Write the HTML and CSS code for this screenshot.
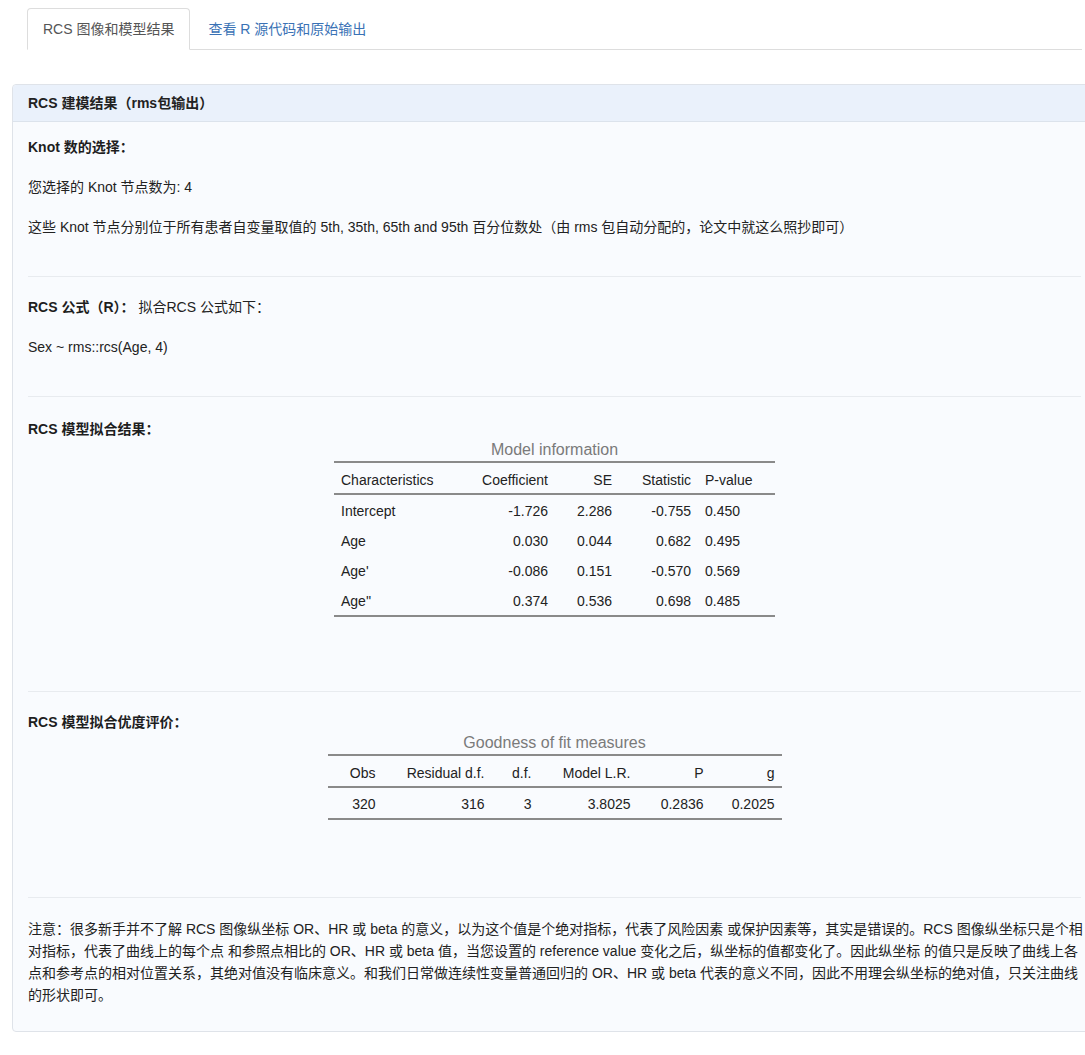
FILE: index.html
```html
<!DOCTYPE html>
<html lang="zh-CN">
<head>
<meta charset="utf-8">
<title>RCS 图像和模型结果</title>
<link rel="stylesheet" href="styles.css">
</head>
<body>
<div class="page">
  <ul class="tabs">
    <li class="tab active"><a>RCS 图像和模型结果</a></li>
    <li class="tab"><a>查看 R 源代码和原始输出</a></li>
  </ul>

  <div class="panel">
    <div class="panel-heading">RCS 建模结果（rms包输出）</div>
    <div class="panel-body">
      <p class="txt"><b>Knot 数的选择：</b></p>
      <p class="txt">您选择的 Knot 节点数为: 4</p>
      <p class="txt">这些 Knot 节点分别位于所有患者自变量取值的 5th, 35th, 65th and 95th 百分位数处（由 rms 包自动分配的，论文中就这么照抄即可）</p>
      <hr class="sep">
      <p class="txt"><b>RCS 公式（R）：</b> 拟合RCS 公式如下：</p>
      <p class="txt">Sex ~ rms::rcs(Age, 4)</p>
      <hr class="sep">
      <p class="txt tight shift"><b>RCS 模型拟合结果：</b></p>
      <div class="tbl-wrap">
        <table class="stat model">
          <caption>Model information</caption>
          <colgroup>
            <col class="c1"><col class="c2"><col class="c3"><col class="c4"><col class="c5">
          </colgroup>
          <thead>
            <tr><th class="l">Characteristics</th><th class="r">Coefficient</th><th class="r">SE</th><th class="r">Statistic</th><th class="l">P-value</th></tr>
          </thead>
          <tbody>
            <tr><td class="l">Intercept</td><td class="r">-1.726</td><td class="r">2.286</td><td class="r">-0.755</td><td class="l">0.450</td></tr>
            <tr><td class="l">Age</td><td class="r">0.030</td><td class="r">0.044</td><td class="r">0.682</td><td class="l">0.495</td></tr>
            <tr><td class="l">Age'</td><td class="r">-0.086</td><td class="r">0.151</td><td class="r">-0.570</td><td class="l">0.569</td></tr>
            <tr><td class="l">Age''</td><td class="r">0.374</td><td class="r">0.536</td><td class="r">0.698</td><td class="l">0.485</td></tr>
          </tbody>
        </table>
      </div>
      <hr class="sep">
      <p class="txt tight"><b>RCS 模型拟合优度评价：</b></p>
      <div class="tbl-wrap tbl-last">
        <table class="stat gof">
          <caption>Goodness of fit measures</caption>
          <colgroup>
            <col class="g1"><col class="g2"><col class="g3"><col class="g4"><col class="g5"><col class="g6">
          </colgroup>
          <thead>
            <tr><th class="r">Obs</th><th class="r">Residual d.f.</th><th class="r">d.f.</th><th class="r">Model L.R.</th><th class="r">P</th><th class="r">g</th></tr>
          </thead>
          <tbody>
            <tr><td class="r">320</td><td class="r">316</td><td class="r">3</td><td class="r">3.8025</td><td class="r">0.2836</td><td class="r">0.2025</td></tr>
          </tbody>
        </table>
      </div>
      <hr class="sep">
      <p class="note">注意：很多新手并不了解 RCS 图像纵坐标 OR、HR 或 beta 的意义，以为这个值是个绝对指标，代表了风险因素 或保护因素等，其实是错误的。RCS 图像纵坐标只是个相对指标，代表了曲线上的每个点 和参照点相比的 OR、HR 或 beta 值，当您设置的 reference value 变化之后，纵坐标的值都变化了。因此纵坐标 的值只是反映了曲线上各点和参考点的相对位置关系，其绝对值没有临床意义。和我们日常做连续性变量普通回归的 OR、HR 或 beta 代表的意义不同，因此不用理会纵坐标的绝对值，只关注曲线的形状即可。</p>
    </div>
  </div>
</div>
</body>
</html>
```

FILE: styles.css
```css
html, body {
  margin: 0;
  padding: 0;
  background: #ffffff;
  overflow: hidden;
}

body {
  font-family: "Liberation Sans", "Noto Sans CJK SC", sans-serif;
  font-size: 14px;
  line-height: 20px;
  color: #333333;
}

.page {
  width: 1055px;
  padding: 8px 0 0 27px;
}

/* Tabs */
.tabs {
  list-style: none;
  margin: 0;
  padding: 0;
  display: flex;
  border-bottom: 1px solid #dddddd;
}

.tab {
  margin-right: 2px;
  margin-bottom: -1px;
}

.tab a {
  display: block;
  padding: 10px 15px;
  line-height: 20px;
  border: 1px solid transparent;
  border-radius: 4px 4px 0 0;
  color: #3a72b5;
  cursor: pointer;
}

.tab.active a {
  color: #555555;
  background: #ffffff;
  border-color: #dddddd #dddddd transparent;
}

/* Panel */
.panel {
  margin: 34px -15px 0 -15px;
  border: 1px solid #dfe3e9;
  border-radius: 4px;
  background: #f9fbfe;
}

.panel-heading {
  background: #eaf1fb;
  border-bottom: 1px solid #dce3ec;
  border-radius: 4px 4px 0 0;
  padding: 10px 15px;
  line-height: 16px;
  font-weight: bold;
  color: #222222;
}

.panel-body {
  padding: 15px;
}

.txt {
  margin: 0 0 20px;
  color: #222222;
}

.txt b {
  color: #1e1e1e;
}

.txt.tight {
  margin-bottom: 0;
}

.txt.shift {
  padding-top: 2px;
}

.sep {
  border: 0;
  border-top: 1px solid #e8ebef;
  margin: 39px 0 20px;
  height: 0;
}

/* Stat tables */
.tbl-wrap {
  margin-bottom: 74px;
}

.tbl-wrap.tbl-last {
  margin-bottom: 77px;
}

.stat {
  margin: 0 auto;
  border-collapse: collapse;
  table-layout: fixed;
  color: #222222;
  border-top: 2px solid #8a8a8a;
  border-bottom: 2px solid #8a8a8a;
}

.stat caption {
  font-size: 16px;
  line-height: 22px;
  color: #7a7a7a;
  text-align: center;
}

.stat thead th {
  font-weight: normal;
  padding: 7px 7px 3px;
  border-bottom: 2px solid #8a8a8a;
  white-space: nowrap;
}

.stat td {
  padding: 6px 7px 4px;
  white-space: nowrap;
}

.stat .l { text-align: left; }
.stat .r { text-align: right; }

.model { width: 441px; }
.model .c1 { width: 138px; }
.model .c2 { width: 83px; }
.model .c3 { width: 64px; }
.model .c4 { width: 79px; }
.model .c5 { width: 77px; }

.gof { width: 454px; }
.gof .g1 { width: 55px; }
.gof .g2 { width: 109px; }
.gof .g3 { width: 47px; }
.gof .g4 { width: 99px; }
.gof .g5 { width: 73px; }
.gof .g6 { width: 71px; }

.note {
  margin: 0 -4px 10px 0;
  line-height: 22px;
  color: #222222;
}
```
